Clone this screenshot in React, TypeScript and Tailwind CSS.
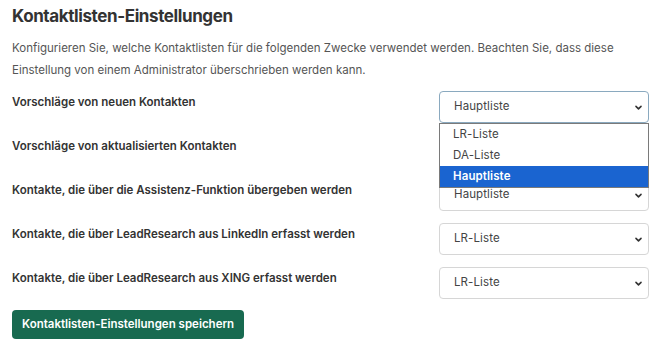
import React from 'react';

const rows = [
  { label: 'Vorschläge von neuen Kontakten', value: 'Hauptliste', open: true },
  { label: 'Vorschläge von aktualisierten Kontakten', value: 'Hauptliste' },
  { label: 'Kontakte, die über die Assistenz-Funktion übergeben werden', value: 'Hauptliste' },
  { label: 'Kontakte, die über LeadResearch aus LinkedIn erfasst werden', value: 'LR-Liste' },
  { label: 'Kontakte, die über LeadResearch aus XING erfasst werden', value: 'LR-Liste' },
];

const options = ['LR-Liste', 'DA-Liste', 'Hauptliste'];

const Chevron = () => (
  <svg className="h-[9px] w-[9px] text-[#333]" viewBox="0 0 16 16" fill="none" stroke="currentColor" strokeWidth={2.8} strokeLinecap="round" strokeLinejoin="round">
    <path d="M3.5 6l4.5 4.5L12.5 6" />
  </svg>
);

const FakeSelect: React.FC<{ value: string; open?: boolean }> = ({ value, open }) => (
  <div className="relative w-[210px] shrink-0">
    <div
      className={`flex h-[32px] items-center justify-between rounded-[4px] border bg-white pl-[14px] pr-[5px] text-[11.5px] tracking-[0.1px] text-[#444] ${
        open ? 'border-[#8aa9bf]' : 'border-[#d6d6d6]'
      }`}
    >
      <span>{value}</span>
      <Chevron />
    </div>
    {open && (
      <div className="absolute left-0 top-[32px] z-10 w-[210px] border border-[#7a7a7a] bg-white text-[11.5px] tracking-[0.1px] text-[#444]">
        {options.map((o) => (
          <div
            key={o}
            className={`flex h-[21px] items-center pl-[13px] ${o === value ? 'bg-[#1a64d0] font-semibold text-white' : ''}`}
          >
            {o}
          </div>
        ))}
      </div>
    )}
  </div>
);

export default function App() {
  return (
    <div className="min-h-[346px] w-[670px] bg-white px-[12px] pt-[4px] font-['Inter',sans-serif]">
      <h1 className="text-[17px] font-bold leading-[24px] tracking-[-0.4px] text-[#333]">Kontaktlisten-Einstellungen</h1>
      <p className="mt-[9px] w-[630px] text-[11.5px] leading-[22px] text-[#555]">
        Konfigurieren Sie, welche Kontaktlisten für die folgenden Zwecke verwendet werden. Beachten Sie, dass diese
        <br />
        Einstellung von einem Administrator überschrieben werden kann.
      </p>
      <div className="mt-[10px] flex w-[637px] flex-col gap-[12px]">
        {rows.map((r) => (
          <div key={r.label} className="flex items-start justify-between">
            <span className="pt-[1px] text-[11.5px] font-semibold leading-[20px] text-[#333]">{r.label}</span>
            <FakeSelect value={r.value} open={r.open} />
          </div>
        ))}
      </div>
      <button className="mt-[11px] h-[29px] rounded-[4px] bg-[#186a50] px-[10px] text-[11.5px] font-semibold text-white">
        Kontaktlisten-Einstellungen speichern
      </button>
    </div>
  );
}
